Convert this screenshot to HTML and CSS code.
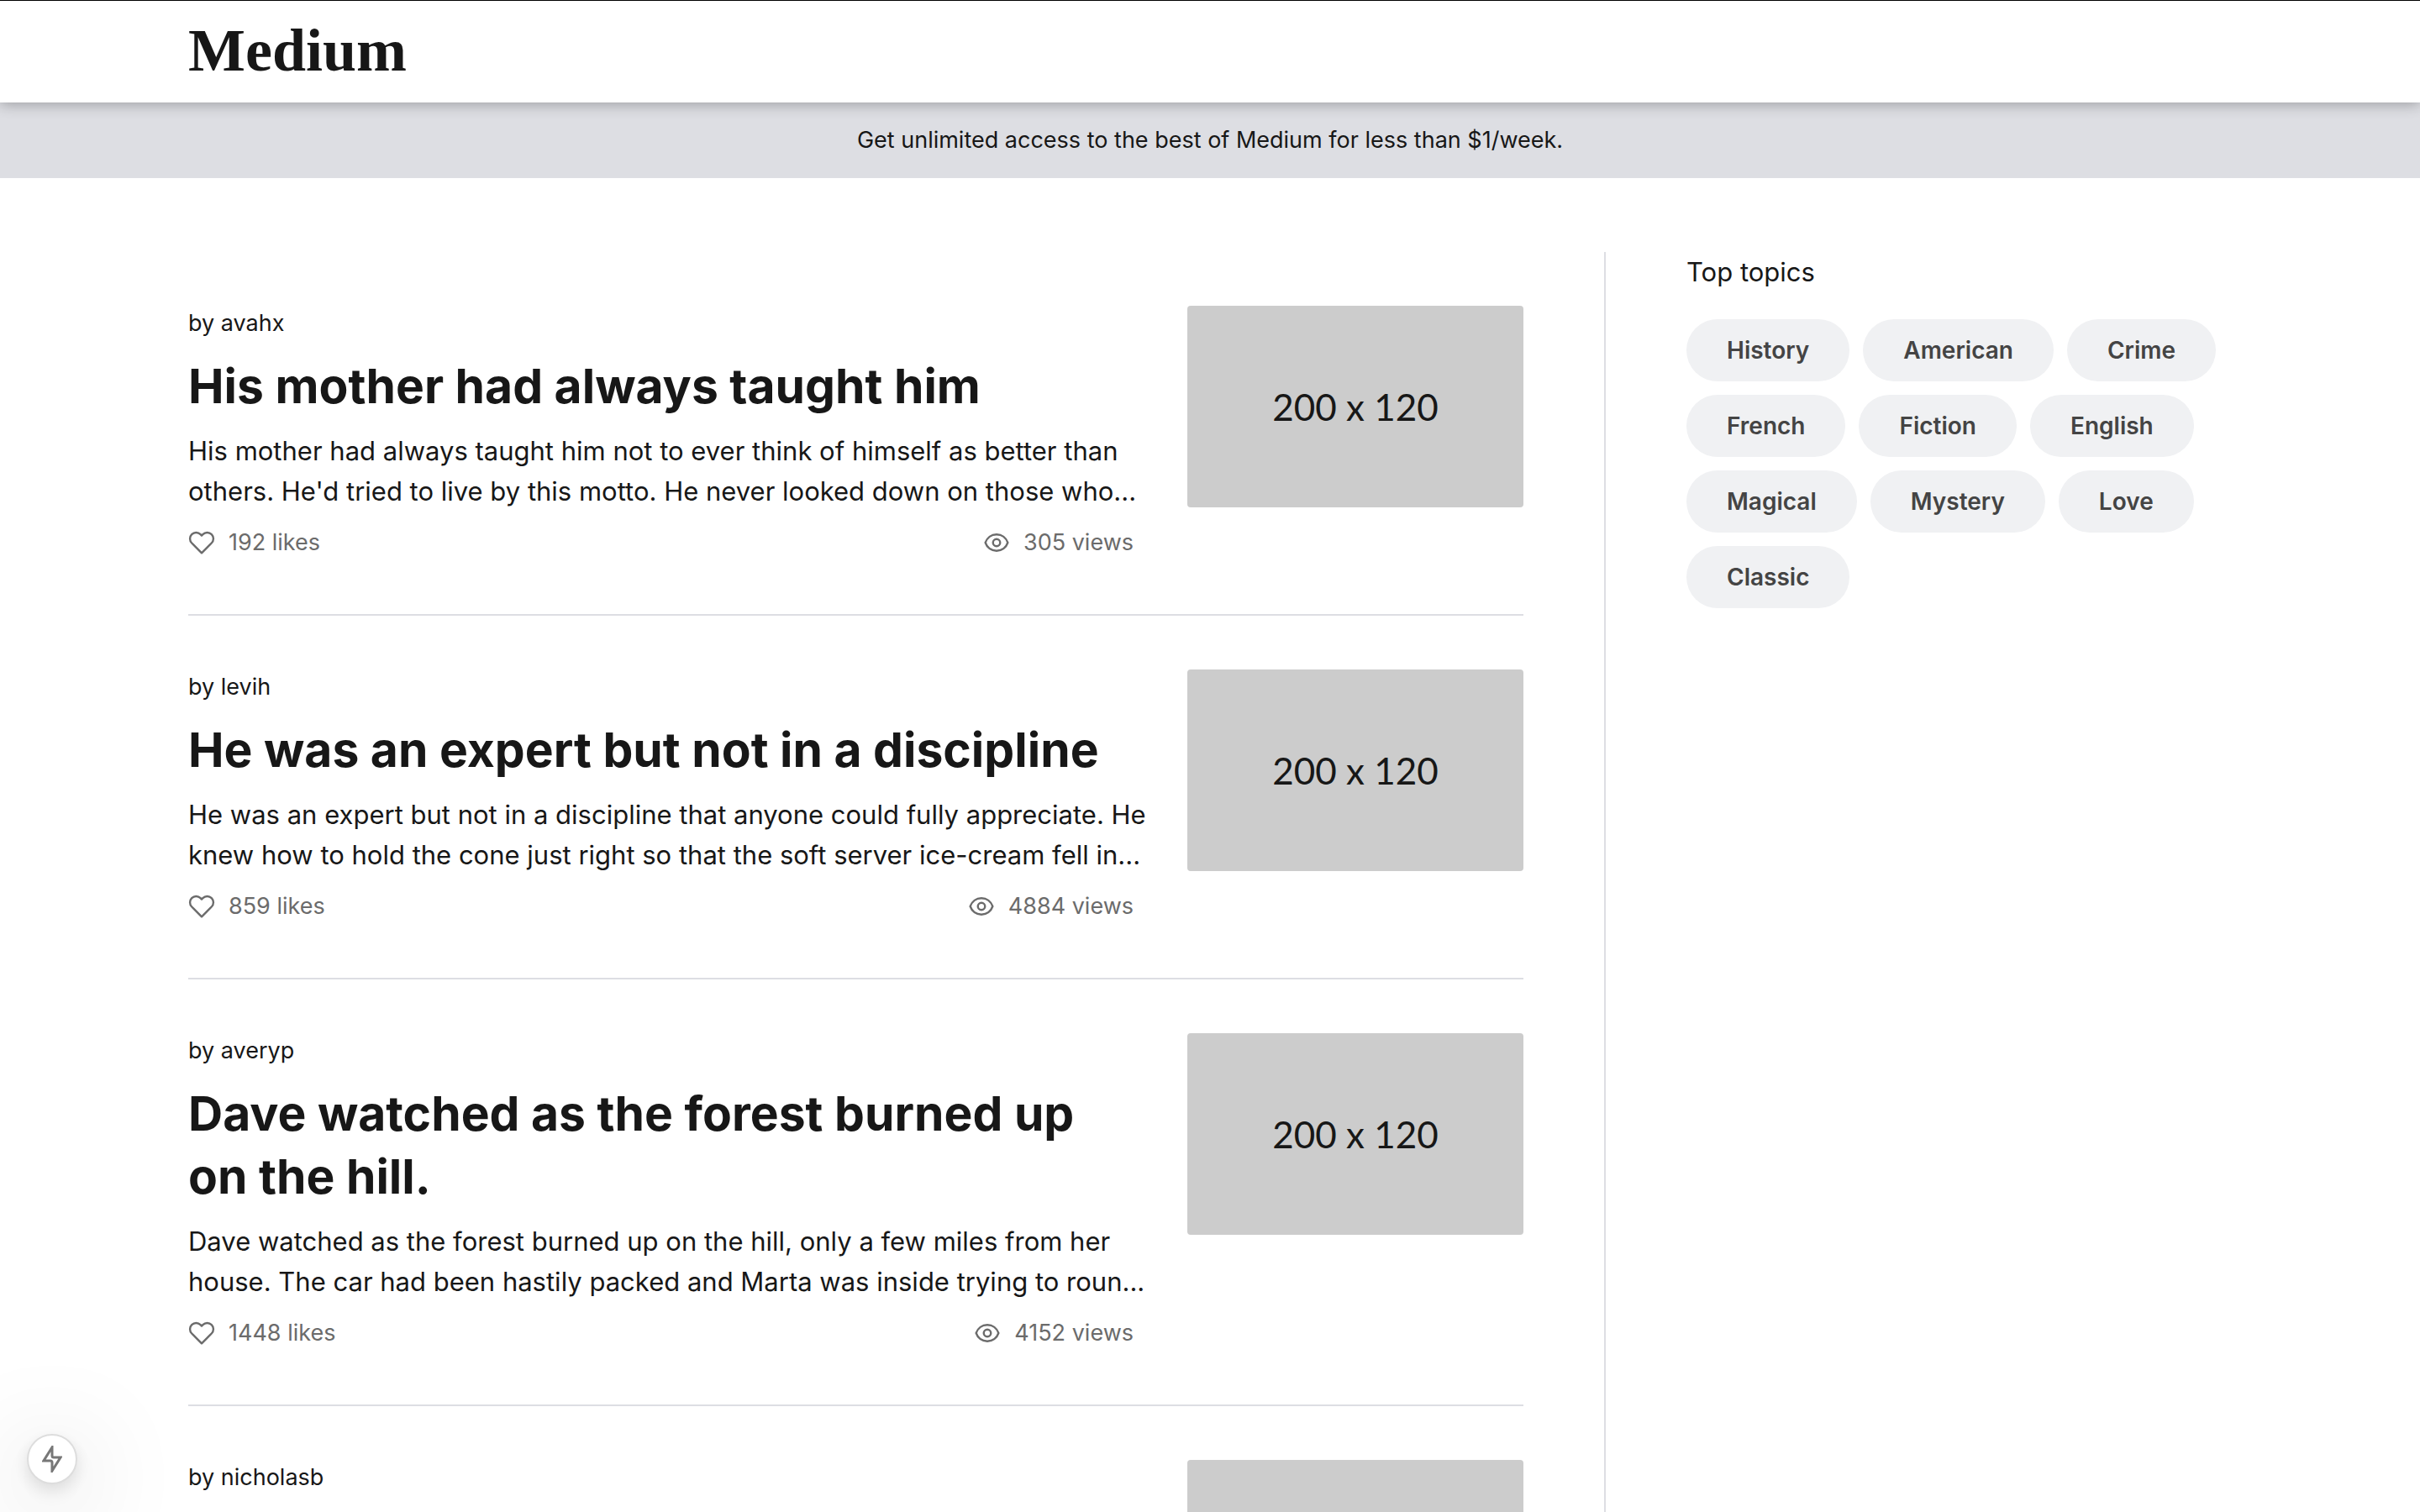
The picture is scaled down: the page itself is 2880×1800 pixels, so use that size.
FILE: index.html
```html
<!DOCTYPE html>
<html lang="en">
<head>
<meta charset="utf-8">
<meta name="viewport" content="width=device-width, initial-scale=1">
<title>Medium</title>
<link rel="stylesheet" href="styles.css">
</head>
<body>
<svg class="sprite" aria-hidden="true">
  <symbol id="heart" viewBox="0 0 24 24"><path d="M20.840 4.610a5.500 5.500 0 0 0-7.780 0L12 5.670l-1.060-1.060a5.500 5.500 0 0 0-7.780 7.780l1.060 1.060L12 21.230l7.780-7.780 1.060-1.060a5.500 5.500 0 0 0 0-7.780z"/></symbol>
  <symbol id="eye" viewBox="0 0 24 24"><path d="M2 12c1.500-4.400 5.300-7.300 10-7.300s8.500 2.900 10 7.300c-1.500 4.400-5.300 7.300-10 7.300s-8.500-2.900-10-7.300z"/><circle cx="12" cy="12" r="3.200"/></symbol>
</svg>
<header class="header">
  <a class="logo" href="#">Medium</a>
</header>
<p class="banner">Get unlimited access to the best of Medium for less than $1/week.</p>
<div class="layout">
  <main class="feed">
    <article class="post">
      <div class="post-body">
        <p class="author">by avahx</p>
        <h2 class="title">His mother had always taught him</h2>
        <p class="excerpt">His mother had always taught him not to ever think of himself as better than others. He'd tried to live by this motto. He never looked down on those who...</p>
        <div class="stats">
          <span class="stat"><svg class="icon"><use href="#heart"/></svg>192 likes</span>
          <span class="stat"><svg class="icon"><use href="#eye"/></svg>305 views</span>
        </div>
      </div>
      <div class="thumb">200 x 120</div>
    </article>
    <article class="post">
      <div class="post-body">
        <p class="author">by levih</p>
        <h2 class="title">He was an expert but not in a discipline</h2>
        <p class="excerpt">He was an expert but not in a discipline that anyone could fully appreciate. He knew how to hold the cone just right so that the soft server ice-cream fell in...</p>
        <div class="stats">
          <span class="stat"><svg class="icon"><use href="#heart"/></svg>859 likes</span>
          <span class="stat"><svg class="icon"><use href="#eye"/></svg>4884 views</span>
        </div>
      </div>
      <div class="thumb">200 x 120</div>
    </article>
    <article class="post">
      <div class="post-body">
        <p class="author">by averyp</p>
        <h2 class="title">Dave watched as the forest burned up on the hill.</h2>
        <p class="excerpt">Dave watched as the forest burned up on the hill, only a few miles from her house. The car had been hastily packed and Marta was inside trying to roun...</p>
        <div class="stats">
          <span class="stat"><svg class="icon"><use href="#heart"/></svg>1448 likes</span>
          <span class="stat"><svg class="icon"><use href="#eye"/></svg>4152 views</span>
        </div>
      </div>
      <div class="thumb">200 x 120</div>
    </article>
    <article class="post">
      <div class="post-body">
        <p class="author">by nicholasb</p>
      </div>
      <div class="thumb"></div>
    </article>
  </main>
  <aside class="sidebar">
    <h3 class="sidebar-title">Top topics</h3>
    <div class="topics">
      <button class="topic" type="button">History</button>
      <button class="topic" type="button">American</button>
      <button class="topic" type="button">Crime</button>
      <button class="topic" type="button">French</button>
      <button class="topic" type="button">Fiction</button>
      <button class="topic" type="button">English</button>
      <button class="topic" type="button">Magical</button>
      <button class="topic" type="button">Mystery</button>
      <button class="topic" type="button">Love</button>
      <button class="topic" type="button">Classic</button>
    </div>
  </aside>
</div>
<button class="quick" type="button" aria-label="Quick actions">
  <svg class="bolt" viewBox="0 0 24 32"><path d="M12 2v10q0 2 2 2h8L12 30V20q0-2-2-2H2z"/></svg>
</button>
</body>
</html>
```
FILE: styles.css
```css
* {
  box-sizing: border-box;
  margin: 0;
}

body {
  background: #fff;
  color: #171717;
  font: 27px/42px Inter, "Liberation Sans", sans-serif;
}

.sprite {
  position: absolute;
  width: 0;
  height: 0;
}

.header {
  position: relative;
  padding: 18px 224px 20px;
  border-top: 1px solid #000;
  background: #fff;
  box-shadow: 0 2px 16px rgba(0, 0, 0, 0.3);
}

.logo {
  display: block;
  width: max-content;
  color: inherit;
  font: bold 72px/83px "Liberation Serif", serif;
  text-decoration: none;
}

.banner {
  padding: 24px;
  background: #dddee3;
  text-align: center;
}

.layout {
  display: grid;
  grid-template-columns: minmax(0, 1fr) 747px;
  padding: 88px 224px 0;
}

.feed {
  padding-right: 96px;
}

.post {
  display: flex;
  align-items: flex-start;
  gap: 64px;
  padding: 64px 0;
  border-bottom: 2px solid #dddee3;
}

.post-body {
  display: flex;
  flex: 1;
  flex-direction: column;
  gap: 16px;
  min-width: 0;
}

.title {
  font-size: 57px;
  font-weight: 700;
  line-height: 75px;
}

/* lets a long line run slightly into the gutter */
.excerpt {
  margin-right: -24px;
  font-size: 31px;
  line-height: 48px;
}

.stats {
  display: flex;
  justify-content: space-between;
  color: #6b6b6b;
}

.stat {
  display: flex;
  align-items: center;
  gap: 16px;
}

.icon {
  width: 32px;
  height: 32px;
  fill: none;
  stroke: currentColor;
  stroke-width: 1.8;
  stroke-linejoin: round;
}

.thumb {
  display: grid;
  flex: none;
  place-items: center;
  width: 400px;
  height: 240px;
  border-radius: 4px;
  background: #ccc;
  font: 44px/48px Lato, sans-serif;
}

.sidebar {
  padding-left: 96px;
  border-left: 2px solid #dddee3;
}

.sidebar-title {
  margin-bottom: 32px;
  font-size: 31px;
  font-weight: 400;
  line-height: 48px;
}

.topics {
  display: flex;
  flex-wrap: wrap;
  gap: 16px;
}

.topic {
  padding: 16px 48px;
  border: 0;
  border-radius: 37px;
  background: #f0f1f3;
  color: #444;
  font: 600 28px/42px Inter, "Liberation Sans", sans-serif;
}

.quick {
  position: fixed;
  bottom: 33px;
  left: 32px;
  display: grid;
  place-items: center;
  width: 60px;
  height: 60px;
  padding: 0;
  border: 2px solid #ddd;
  border-radius: 50%;
  background: #fff;
  color: #777;
  box-shadow: 0 22px 120px rgba(0, 0, 0, 0.25), 0 8px 20px rgba(0, 0, 0, 0.12);
}

.bolt {
  width: 24px;
  height: 32px;
  fill: none;
  stroke: currentColor;
  stroke-width: 3;
}
```
